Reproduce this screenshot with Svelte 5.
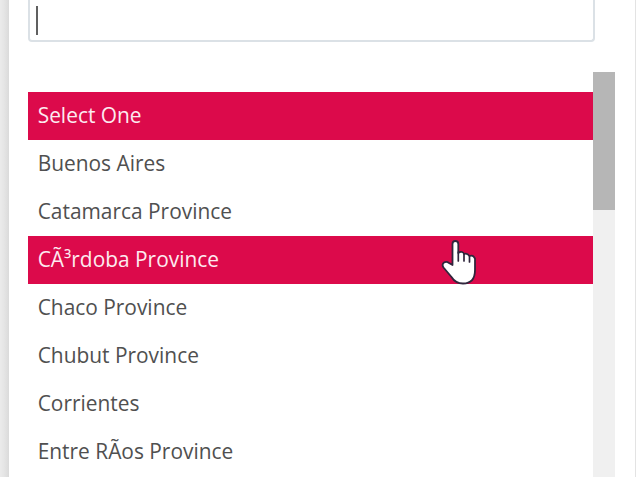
<script>
  let query = "";
  let selected = "Select One";
  let hovered = "CÃ³rdoba Province";

  const provinces = [
    "Select One",
    "Buenos Aires",
    "Catamarca Province",
    "CÃ³rdoba Province",
    "Chaco Province",
    "Chubut Province",
    "Corrientes",
    "Entre RÃos Province"
  ];
</script>

<style>
  :global(body) {
    background: #e9e9e9;
    overflow: hidden;
  }

  .page {
    box-sizing: border-box;
    width: 636px;
    height: 477px;
    padding: 0 1px 0 9px;
    overflow: hidden;
    background: linear-gradient(to right, #ebebeb 0, #e5e5e5 4px, #dadada 9px, #e3e3e3 10px);
    font-family: "Open Sans", "Noto Sans", sans-serif;
    font-size: 20.9px;
    color: #505050;
  }

  .panel {
    box-sizing: border-box;
    height: 477px;
    padding-left: 19px;
    background: #fff;
  }

  .search {
    box-sizing: border-box;
    display: flex;
    align-items: flex-end;
    width: 567px;
    height: 42px;
    padding: 0 6px;
    border: 2px solid #dbe1e6;
    border-top: 0;
    border-radius: 0 0 4px 4px;
  }

  .caret {
    width: 2px;
    height: 29px;
    margin-bottom: 5px;
    background: #606060;
  }

  .results {
    display: flex;
    height: 406px;
    margin-top: 29.5px;
  }

  ul {
    width: 564.5px;
    margin: 0;
    padding: 20px 0 0;
    list-style: none;
  }

  li {
    box-sizing: border-box;
    height: 48px;
    padding-left: 9.7px;
    line-height: 46px;
    white-space: nowrap;
  }

  li.active {
    background: #dc0a4b;
    color: #fdeaf0;
  }

  .track {
    width: 22.5px;
    background: #f0f0f0;
  }

  .thumb {
    height: 138.5px;
    background: #b6b6b6;
  }

  .pointer {
    position: absolute;
    left: 440px;
    top: 238px;
  }
</style>

<div class="page">
  <div class="panel">
    <div class="search">
      {query}<span class="caret"></span>
    </div>
    <div class="results">
      <ul>
        {#each provinces as province}
          <li class:active={province === selected || province === hovered}>{province}</li>
        {/each}
      </ul>
      <div class="track">
        <div class="thumb"></div>
      </div>
    </div>
  </div>
  <svg class="pointer" width="40" height="50" viewBox="0 0 40 50">
    <path
      d="M12.5 27 V6 Q12.5 3 15.3 3 Q18.3 3 18.3 6 V15 Q20 13.5 22 14 Q23.8 14.5 24 16 Q27 14.5 29.5 18 Q33 16.5 35 20.5 V32 Q35 45.5 23 45.5 Q15.5 45.5 11.5 39 L3.5 29.5 Q1.5 26.5 4 24.5 Q6.5 23 9 25 Z"
      fill="#fff"
      stroke="#30263d"
      stroke-width="1.8"
      stroke-linejoin="round"
    />
    <path
      d="M18.3 14 V23 M24 16 V23 M29.5 18 V24"
      fill="none"
      stroke="#30263d"
      stroke-width="1.7"
      stroke-linecap="round"
    />
  </svg>
</div>
